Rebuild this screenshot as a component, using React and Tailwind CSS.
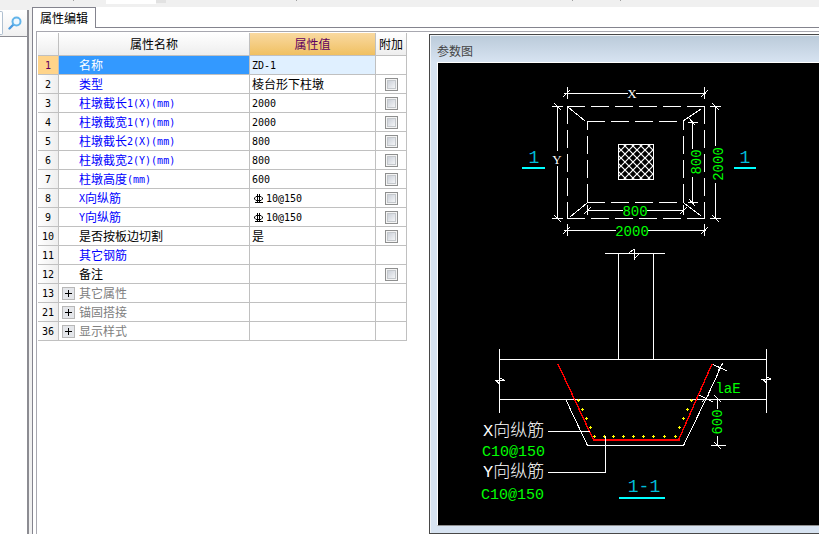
const rows = [
  { no: 1, name: '名称', value: 'ZD-1', selected: true },
  { no: 2, name: '类型', value: '棱台形下柱墩', color: 'text-[#0000ff]', check: true },
  { no: 3, name: '柱墩截长1(X)(mm)', value: '2000', color: 'text-[#0000ff]', check: true },
  { no: 4, name: '柱墩截宽1(Y)(mm)', value: '2000', color: 'text-[#0000ff]', check: true },
  { no: 5, name: '柱墩截长2(X)(mm)', value: '800', color: 'text-[#0000ff]', check: true },
  { no: 6, name: '柱墩截宽2(Y)(mm)', value: '800', color: 'text-[#0000ff]', check: true },
  { no: 7, name: '柱墩高度(mm)', value: '600', color: 'text-[#0000ff]', check: true },
  { no: 8, name: 'X向纵筋', value: '10@150', rebar: true, color: 'text-[#0000ff]', check: true },
  { no: 9, name: 'Y向纵筋', value: '10@150', rebar: true, color: 'text-[#0000ff]', check: true },
  { no: 10, name: '是否按板边切割', value: '是', color: 'text-black', check: true },
  { no: 11, name: '其它钢筋', value: '', color: 'text-[#0000ff]' },
  { no: 12, name: '备注', value: '', color: 'text-black', check: true },
  { no: 13, name: '其它属性', value: '', color: 'text-[#808080]', group: true },
  { no: 21, name: '锚固搭接', value: '', color: 'text-[#808080]', group: true },
  { no: 36, name: '显示样式', value: '', color: 'text-[#808080]', group: true },
];

// Latin runs go in a half-width mono so they sit on the same grid as the hanzi
function Mixed({ text }) {
  return String(text).split(/([\x20-\x7e]+)/).filter(Boolean).map((part, i) =>
    /^[\x20-\x7e]/.test(part)
      ? <span key={i} className="align-[1px] font-['DejaVu_Sans_Mono',monospace] text-[10px] leading-none">{part}</span>
      : <span key={i}>{part}</span>
  );
}

function RebarMark() {
  return (
    <svg width="11" height="11" viewBox="0 0 11 11" fill="none" stroke="currentColor" className="mr-0.5 ml-px shrink-0">
      <path d="M4.5 1v9M6.5 1v9M2 9.5h8" shapeRendering="crispEdges" />
      <path d="M3 3.5h5l1.5 1.5v1L8 7.5H3L1.5 6V5z" />
    </svg>
  );
}

function SearchIcon() {
  return (
    <svg width="14" height="14" viewBox="0 0 14 14" fill="none">
      <path d="M5 9L1.5 12.5" stroke="#4a9ae0" strokeWidth="2.4" strokeLinecap="round" />
      <circle cx="8.5" cy="5.5" r="4" fill="#eef8ff" stroke="#62b4ea" strokeWidth="2" />
    </svg>
  );
}

function PropertyTable() {
  return (
    <table className="w-[369px] shrink-0 table-fixed border-separate border-spacing-0 text-[12px] leading-[18px]">
      <colgroup>
        <col className="w-[21px]" />
        <col className="w-[191px]" />
        <col className="w-[126px]" />
        <col className="w-[31px]" />
      </colgroup>
      <thead>
        <tr className="h-[23px]">
          <th className="border-r border-b border-[#c0c0c0] bg-linear-to-b from-white to-[#eeeeee] p-0" />
          <th className="border-r border-b border-[#c0c0c0] bg-linear-to-b from-white to-[#eeeeee] p-0 font-normal">属性名称</th>
          <th className="border-r border-b border-[#c0c0c0] bg-linear-to-b from-[#f9d9a0] to-[#f0c060] p-0 font-normal text-[#600060]">属性值</th>
          <th className="border-r border-b border-[#c0c0c0] bg-linear-to-b from-white to-[#eeeeee] p-0 font-normal whitespace-nowrap">附加</th>
        </tr>
      </thead>
      <tbody>
        {rows.map((row) => (
          <tr key={row.no} className="h-[19px]">
            <td className={`border-r border-b border-[#c0c0c0] p-0 text-center ${row.selected ? 'bg-[#ffd48a] text-[#600060]' : 'bg-linear-to-r from-white to-[#eeeeee]'}`}>
              <div className="h-[18px]"><Mixed text={row.no} /></div>
            </td>
            <td className={`border-r border-b border-[#c0c0c0] p-0 ${row.selected ? 'bg-[#3399ff] text-white' : row.color}`}>
              <div className="flex h-[18px] items-center">
                <div className="flex w-5 shrink-0 pl-[3px]">
                  {row.group && (
                    <button aria-label={`展开${row.name}`} className="flex size-[13px] items-center justify-center border border-[#b8b8b8] bg-[#e4e6ea]">
                      <svg width="9" height="9" viewBox="0 0 9 9" stroke="#000" shapeRendering="crispEdges"><path d="M4.5 1v7M1 4.5h7" /></svg>
                    </button>
                  )}
                </div>
                <span className="whitespace-nowrap"><Mixed text={row.name} /></span>
              </div>
            </td>
            <td className={`border-r border-b border-[#c0c0c0] p-0 ${row.selected ? 'bg-[#e0f0ff]' : ''}`}>
              <div className="flex h-[18px] items-center pl-0.5">
                {row.rebar && <RebarMark />}
                <span><Mixed text={row.value} /></span>
              </div>
            </td>
            <td className="border-r border-b border-[#c0c0c0] p-0">
              <div className="flex h-[18px] items-center justify-center">
                {row.check && (
                  <input
                    type="checkbox"
                    aria-label={`${row.name} 附加`}
                    className="size-[13px] appearance-none border border-[#8e8f8f] bg-linear-to-br from-[#c0c6d0] to-[#ffffff] shadow-[inset_0_0_0_1px_#f4f4f4,inset_0_0_0_2px_#c4c8cc] checked:bg-[#3399ff]"
                  />
                )}
              </div>
            </td>
          </tr>
        ))}
      </tbody>
    </table>
  );
}

const bars = [
  [578, 400], [582, 409], [586, 418], [590, 427],
  [594, 436], [604, 436], [613, 436], [623, 436], [633, 436], [643, 436], [653, 436], [664, 436], [675, 436],
  [679, 427], [683, 418], [687, 409], [691, 400],
];

function Drawing() {
  return (
    <svg width="381" height="461" viewBox="438 63 381 461" fill="none" className="shrink-0">
      <defs>
        <pattern id="hatch" x="621" y="142" width="8" height="8" patternUnits="userSpaceOnUse">
          <path d="M0 0l8 8M8 0l-8 8" stroke="#fff" strokeWidth="1.2" />
        </pattern>
      </defs>

      {/* plan */}
      <g stroke="#fff" shapeRendering="crispEdges">
        <path d="M567 106.5H705M567 218.5H705" strokeDasharray="18 6" />
        <path d="M567.5 106V219M704.5 106V219" strokeDasharray="18 6" />
        <path d="M587 121.5H684M587 202.5H684" strokeDasharray="18 6" />
        <path d="M587.5 121V203M683.5 121V203" strokeDasharray="18 6" strokeDashoffset="9" />
        <path d="M568 107L585 121M683 121L701 109M587 203L570 217M684 203L701 216" />
        <rect x="618.5" y="144.5" width="35" height="35" fill="url(#hatch)" />
      </g>

      {/* dimension lines */}
      <g stroke="#fff" shapeRendering="crispEdges">
        <path d="M564 93.5H628M636 93.5H706M567.5 87V99M704.5 87V99M563 97L570 90M701 97L708 90" />
        <path d="M557.5 106V151M557.5 166V219M552 106.5H563M552 218.5H563M554 103L561 110M554 215L561 222" />
        <path d="M587 210.5H623M647 210.5H684M587.5 205V215M683.5 205V215M584 214L591 207M680 214L687 207" />
        <path d="M564 230.5H616M648 230.5H706M567.5 224V236M704.5 224V236M563 234L570 227M701 234L708 227" />
        <path d="M692.5 122V149M692.5 177V203M688 122.5H698M688 202.5H698M689 118L695 125M689 199L695 206" />
        <path d="M715.5 106V146M715.5 183V219M710 106.5H721M710 218.5H721M712 103L719 110M712 215L719 222" />
      </g>

      {/* section */}
      <g stroke="#fff" shapeRendering="crispEdges">
        <path d="M605 253.5H665M618.5 253V359M653.5 253V359M629 253L634 249M634.5 249V260M634 259L639 254" />
        <path d="M499 359.5H767M499 399.5H767M499.5 349V413M766.5 349V413" />
        <path d="M495 380.5H505M496 380L499 384M500 378L504 380M761 379.5H771M763 379L766 383M767 377L771 379" />
        <path d="M566 400L587.5 445.5H683.5L706 399L721 367" />
        <path d="M712 364L727 371M699 395L713 402M718 371L723 363M702 402L709 395" />
        <path d="M717.5 399V409M717.5 436V446M711 445.5H726M714 395L721 402M714 442L721 449" />
      </g>
      <g stroke="#f00" shapeRendering="crispEdges">
        <path d="M558 364L593 439M679 439L712 364" strokeWidth="1.4" />
        <path d="M593 440H680" strokeWidth="2" />
      </g>
      <path d={bars.map(([x, y]) => `M${x - 1} ${y + 0.5}h3M${x + 0.5} ${y - 1}v3`).join('')} stroke="#ff0" shapeRendering="crispEdges" />
      <path d="M548 431.5H590M548 472.5H605.5V436" stroke="#fff" shapeRendering="crispEdges" />
      <path d="M522 168H545M734 168H756M619 498H665" stroke="#0ff" strokeWidth="2" shapeRendering="crispEdges" />

      <g fill="#fff" textAnchor="middle" className="font-['Liberation_Serif',serif] text-[13px]">
        <text x="632" y="98">X</text>
        <text x="557" y="164">Y</text>
      </g>
      <g fill="#0f0" textAnchor="middle" className="font-['Liberation_Mono',monospace] text-[14px]">
        <text x="635" y="216">800</text>
        <text x="632" y="236">2000</text>
        <text transform="translate(701 162) rotate(-90)">800</text>
        <text transform="translate(723 164) rotate(-90)">2000</text>
        <text transform="translate(722 422) rotate(-90)">600</text>
        <text x="728" y="393">laE</text>
      </g>
      <g fill="#00bcd8" textAnchor="middle" className="font-['Liberation_Mono',monospace] text-[18px]">
        <text x="534" y="163">1</text>
        <text x="745" y="163">1</text>
        <text x="644" y="492">1-1</text>
      </g>
      <g fill="#fff" className="font-['Liberation_Mono','Noto_Sans_CJK_SC',monospace] text-[17px] font-light">
        <text x="483" y="436">X向纵筋</text>
        <text x="483" y="477">Y向纵筋</text>
      </g>
      <g fill="#0f0" className="font-['Liberation_Mono',monospace] text-[15px]">
        <text x="482" y="456">C10@150</text>
        <text x="481" y="499">C10@150</text>
      </g>
    </svg>
  );
}

export default function App() {
  return (
    <div className="flex min-h-screen flex-col overflow-hidden bg-[#f0f0f0] font-['Noto_Sans_CJK_SC',sans-serif] text-[12px] text-black">
      {/* tail of the toolbar */}
      <div className="flex h-[7px] items-start">
        <div className="ml-[73px] h-px w-px bg-[#a0a0a0]" />
        <div className="ml-8 h-1 w-[50px] bg-white" />
        <div className="h-[3px] w-[10px] bg-[#e2e2e2]" />
        <div className="ml-[130px] h-px w-px bg-[#a0a0a0]" />
        <div className="ml-[275px] h-px w-px bg-[#a0a0a0]" />
        <div className="ml-[47px] h-px w-px bg-[#a0a0a0]" />
      </div>

      <div className="flex flex-1">
        <aside className="mt-[3px] flex w-[29px] shrink-0 flex-col border-r-2 border-[#8c8c92] bg-white">
          <div className="flex h-[27px] items-center border-b border-[#8c8c92] bg-linear-to-b from-white to-[#f0f0f0]">
            <input aria-label="搜索" className="h-6 w-[3px] rounded-r-xs border border-l-0 border-[#b0c0d0] bg-white p-0" />
            <button aria-label="查找" className="ml-[5px]">
              <SearchIcon />
            </button>
          </div>
        </aside>

        <main className="ml-[3px] flex min-w-0 flex-1 flex-col bg-white">
          <div className="flex h-[21px]" role="tablist">
            <button role="tab" aria-selected="true" className="w-16 border border-b-0 border-[#84848e] bg-white text-center leading-[18px] whitespace-nowrap">
              属性编辑
            </button>
            <div className="flex-1 border-b border-[#84848e]" />
          </div>

          <div className="flex flex-1 border-l border-[#84848e] pt-[3px] pl-[3px]">
            <div className="flex min-w-0 flex-1 items-start border-t border-l border-[#a8a8b0] pl-px">
              <div className="pt-px">
                <PropertyTable />
              </div>

              <section className="mt-0.5 ml-[22px] flex min-w-0 flex-1 flex-col self-stretch border border-r-0 border-[#484848] bg-[#d7e3f1] shadow-[inset_1px_1px_0_#f0f4f8]">
                <h2 className="mt-px ml-px h-[26px] bg-linear-to-b from-[#bbcbda] to-[#d7e3f1] pl-1.5 text-[12px] leading-[30px] text-[#444444]">参数图</h2>
                <div className="mb-[7px] ml-[7px] flex flex-1 overflow-hidden border border-r-0 border-white border-b-[#909090] bg-black">
                  <Drawing />
                </div>
              </section>
            </div>
          </div>
        </main>
      </div>
    </div>
  );
}
